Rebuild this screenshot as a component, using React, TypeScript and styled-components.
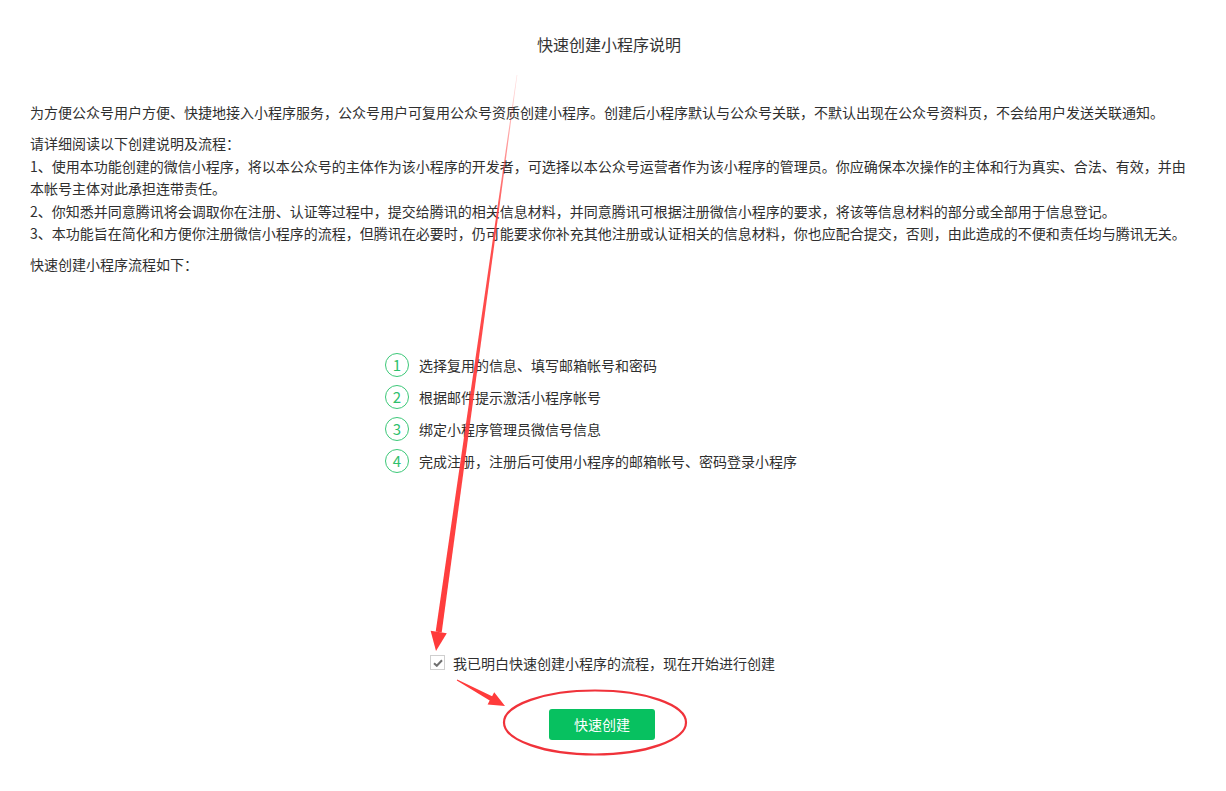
import React from "react";
import styled, { createGlobalStyle } from "styled-components";

const GlobalStyle = createGlobalStyle`
  html, body {
    margin: 0;
    padding: 0;
    background: #ffffff;
  }
  body {
    font-family: "Noto Sans CJK SC", "Noto Sans", "Liberation Sans", sans-serif;
    color: #333333;
  }
  * { box-sizing: border-box; }
`;

const Page = styled.div`
  position: relative;
  width: 1226px;
  min-height: 791px;
  overflow: hidden;
  padding: 32px 30px 0 30px;
  display: flex;
  flex-direction: column;
`;

const Title = styled.h2`
  margin: 0;
  padding-right: 8px;
  font-size: 16px;
  line-height: 24px;
  font-weight: normal;
  text-align: center;
  color: #333333;
`;

const Intro = styled.div`
  margin-top: 45px;
  display: flex;
  flex-direction: column;
  gap: 9px;
`;

const Para = styled.p`
  margin: 0;
  font-size: 14px;
  line-height: 22.4px;
  color: #2f2f2f;
`;

const StepList = styled.ol`
  list-style: none;
  margin: 73px auto 0 auto;
  padding: 0;
  width: 456px;
  display: flex;
  flex-direction: column;
`;

const StepRow = styled.li`
  display: flex;
  align-items: center;
  height: 32px;
  gap: 10px;
  font-size: 14px;
  color: #2f2f2f;
`;

const StepNum = styled.span`
  width: 24px;
  height: 24px;
  border: 1.5px solid #3cc878;
  border-radius: 50%;
  color: #2fbf6d;
  font-size: 15px;
  line-height: 21px;
  text-align: center;
  flex: none;
`;

const AgreeRow = styled.label`
  margin-top: 176px;
  padding-right: 21px;
  display: flex;
  justify-content: center;
  align-items: center;
  gap: 8px;
  height: 20px;
  font-size: 14px;
  color: #2f2f2f;
`;

const CheckBox = styled.span`
  width: 15px;
  height: 15px;
  border: 1px solid #cfcfcf;
  background: #ffffff;
  display: flex;
  align-items: center;
  justify-content: center;
  flex: none;
`;

const ButtonWrap = styled.div`
  margin-top: 36px;
  padding-right: 22px;
  display: flex;
  justify-content: center;
`;

const PrimaryButton = styled.button`
  width: 106px;
  height: 31px;
  border: none;
  border-radius: 3px;
  background: #07c160;
  color: #ffffff;
  font-family: inherit;
  font-size: 14px;
  cursor: pointer;
`;

const Annotation = styled.svg`
  position: absolute;
  top: 0;
  left: 0;
  width: 1226px;
  height: 791px;
  pointer-events: none;
`;

const steps = [
  "选择复用的信息、填写邮箱帐号和密码",
  "根据邮件提示激活小程序帐号",
  "绑定小程序管理员微信号信息",
  "完成注册，注册后可使用小程序的邮箱帐号、密码登录小程序",
];

export default function App() {
  return (
    <>
      <GlobalStyle />
      <Page>
        <Title>快速创建小程序说明</Title>
        <Intro>
          <Para>
            为方便公众号用户方便、快捷地接入小程序服务，公众号用户可复用公众号资质创建小程序。创建后小程序默认与公众号关联，不默认出现在公众号资料页，不会给用户发送关联通知。
          </Para>
          <Para>
            请详细阅读以下创建说明及流程：
            <br />
            1、使用本功能创建的微信小程序，将以本公众号的主体作为该小程序的开发者，可选择以本公众号运营者作为该小程序的管理员。你应确保本次操作的主体和行为真实、合法、有效，并由本帐号主体对此承担连带责任。
            <br />
            2、你知悉并同意腾讯将会调取你在注册、认证等过程中，提交给腾讯的相关信息材料，并同意腾讯可根据注册微信小程序的要求，将该等信息材料的部分或全部用于信息登记。
            <br />
            3、本功能旨在简化和方便你注册微信小程序的流程，但腾讯在必要时，仍可能要求你补充其他注册或认证相关的信息材料，你也应配合提交，否则，由此造成的不便和责任均与腾讯无关。
          </Para>
          <Para>快速创建小程序流程如下：</Para>
        </Intro>

        <StepList>
          {steps.map((s, i) => (
            <StepRow key={i}>
              <StepNum>{i + 1}</StepNum>
              <span>{s}</span>
            </StepRow>
          ))}
        </StepList>

        <AgreeRow>
          <CheckBox>
            <svg width="10" height="8" viewBox="0 0 10 8">
              <path d="M1 4.2 L3.8 6.8 L9 1.2" fill="none" stroke="#707070" strokeWidth="2" />
            </svg>
          </CheckBox>
          <span>我已明白快速创建小程序的流程，现在开始进行创建</span>
        </AgreeRow>

        <ButtonWrap>
          <PrimaryButton>快速创建</PrimaryButton>
        </ButtonWrap>

        <Annotation viewBox="0 0 1226 791">
          <defs>
            <linearGradient id="fade" x1="0" y1="75" x2="0" y2="650" gradientUnits="userSpaceOnUse">
              <stop offset="0" stopColor="#ff3b3b" stopOpacity="0.15" />
              <stop offset="0.25" stopColor="#ff3b3b" stopOpacity="0.9" />
              <stop offset="1" stopColor="#ff3b3b" stopOpacity="1" />
            </linearGradient>
          </defs>
          <polygon
            points="516.7,75 517.3,75 441.7,632.4 435.7,631.6"
            fill="url(#fade)"
          />
          <polygon points="446.8,633.2 430.6,630.8 436,651" fill="#ff3b3b" />
          <polygon
            points="456.8,680.4 457.2,679.6 492.1,696.2 494.2,692.2 505,706 487.6,704.6 489.7,700.6"
            fill="#ff3b3b"
          />
          <ellipse
            cx="595"
            cy="722.5"
            rx="91"
            ry="32"
            fill="none"
            stroke="#f0323a"
            strokeWidth="2.2"
          />
        </Annotation>
      </Page>
    </>
  );
}
